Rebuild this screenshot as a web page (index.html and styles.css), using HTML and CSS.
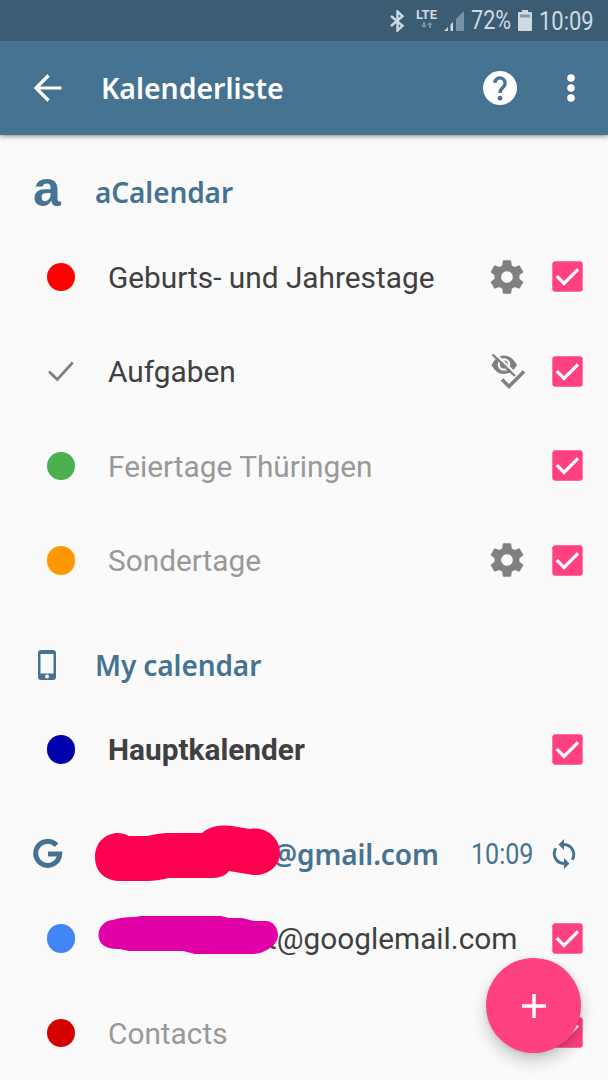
FILE: index.html
```html
<!DOCTYPE html>
<html lang="de">
<head>
<meta charset="utf-8">
<title>Kalenderliste</title>
<link rel="stylesheet" href="styles.css">
</head>
<body>
<svg class="defs" aria-hidden="true">
  <symbol id="gear" viewBox="0 0 24 24"><path d="M19.43 12.98c.04-.32.07-.64.07-.98s-.03-.66-.07-.98l2.11-1.65c.19-.15.24-.42.12-.64l-2-3.46c-.12-.22-.39-.3-.61-.22l-2.49 1c-.52-.4-1.08-.73-1.69-.98l-.38-2.65C14.46 2.18 14.25 2 14 2h-4c-.25 0-.46.18-.49.42l-.38 2.65c-.61.25-1.17.59-1.69.98l-2.49-1c-.23-.09-.49 0-.61.22l-2 3.46c-.13.22-.07.49.12.64l2.11 1.65c-.04.32-.07.65-.07.98s.03.66.07.98l-2.11 1.65c-.19.15-.24.42-.12.64l2 3.46c.12.22.39.3.61.22l2.49-1c.52.4 1.08.73 1.69.98l.38 2.65c.03.24.24.42.49.42h4c.25 0 .46-.18.49-.42l.38-2.65c.61-.25 1.17-.59 1.69-.98l2.49 1c.23.09.49 0 .61-.22l2-3.46c.12-.22.07-.49-.12-.64l-2.11-1.65zM12 15.5c-1.93 0-3.5-1.57-3.5-3.5s1.57-3.5 3.5-3.5 3.5 1.57 3.5 3.5-1.57 3.5-3.5 3.5z"/></symbol>
  <symbol id="box" viewBox="0 0 31 31"><rect x=".3" y=".3" width="30.4" height="30.4" rx="3" fill="#ff4081"/><path d="M4.8 15.2L12 22.3 26 8.3" fill="none" stroke="#fff" stroke-width="3.300"/></symbol>
</svg>

<header class="status">
  <svg class="bluetooth" viewBox="0 0 16 22"><path d="M1.500 6l11.500 9.800L8 20.500V1.500L13 6.200 1.500 16" fill="none" stroke="#cedae1" stroke-width="2.400"/></svg>
  <div class="lte"><span>LTE</span><svg viewBox="0 0 12 6"><path d="M2 0h2v3h2L3 6 0 3h2zM8 6h2V3h2L9 0 6 3h2z"/></svg></div>
  <svg class="signal" viewBox="0 0 20 20"><path d="M0 20l4-4v4zM6.500 20v-6.500l2.500-2.500V20z" fill="#cedae1"/><path d="M12 20V8l8-8v20z" fill="#7692a5"/></svg>
  <span class="cond percent">72%</span>
  <svg class="battery" viewBox="0 0 14 21"><path d="M4 0h6v2h3q1 0 1 1v17q0 1-1 1H1q-1 0-1-1V3q0-1 1-1h3z" fill="#cedae1"/><path d="M2 4.500h10v3H2z" fill="#8198a8"/></svg>
  <span class="cond clock">10:09</span>
</header>

<nav class="appbar">
  <svg class="back" viewBox="0 0 28 28"><path d="M27.500 14H3M14.500 1.500L2 14l12.500 12.500" fill="none" stroke="#fff" stroke-width="3.200"/></svg>
  <h1>Kalenderliste</h1>
  <svg class="help" viewBox="2 2 20 20"><path fill="#fff" d="M12 2C6.480 2 2 6.480 2 12s4.480 10 10 10 10-4.480 10-10S17.520 2 12 2z"/><path d="M9 9a3 3 0 1 1 5.200 2.100c-1.200 1.200-2.200 1.700-2.200 3.900" fill="none" stroke="#467391" stroke-width="2"/><circle cx="12" cy="18" r="1.400" fill="#467391"/></svg>
  <svg class="more" viewBox="0 0 8 28"><circle cx="4" cy="4" r="3.800"/><circle cx="4" cy="14" r="3.800"/><circle cx="4" cy="24" r="3.800"/></svg>
</nav>

<main class="list">
  <div class="row section"><span class="lead letter">a</span><h2>aCalendar</h2></div>
  <div class="row"><span class="mark"><i class="dot red"></i></span><span class="name">Geburts- und Jahrestage</span><svg class="gear"><use href="#gear"/></svg><svg class="box"><use href="#box"/></svg></div>
  <div class="row"><span class="mark"><svg class="tick" viewBox="0 0 28 22"><path d="M2 11.500l8.300 8L25.700 2.500" fill="none" stroke="#808080" stroke-width="2.700"/></svg></span><span class="name">Aufgaben</span>
    <svg class="hidden-tasks" viewBox="0 0 36 36"><path d="M1.500 12Q6 2.500 14 2.500T27 12Q22 21 14 21T1.500 12z" fill="#808080"/><circle cx="14" cy="11.500" r="5.200" fill="#808080" stroke="#fafafa" stroke-width="2.200"/><path d="M4 -.5L27 22" stroke="#fafafa" stroke-width="2.200"/><path d="M2.500 1.500L25 23" stroke="#808080" stroke-width="2.400"/><path d="M13 26l6 6L34 19" fill="none" stroke="#fafafa" stroke-width="4.500"/><path d="M12 26.500l7 7L34 18.500" fill="none" stroke="#808080" stroke-width="3.500"/></svg><svg class="box"><use href="#box"/></svg></div>
  <div class="row"><span class="mark"><i class="dot green"></i></span><span class="name off">Feiertage Thüringen</span><svg class="box"><use href="#box"/></svg></div>
  <div class="row"><span class="mark"><i class="dot orange"></i></span><span class="name off">Sondertage</span><svg class="gear"><use href="#gear"/></svg><svg class="box"><use href="#box"/></svg></div>
  <div class="row section"><span class="lead"><svg class="phone" viewBox="0 0 18 30"><path fill-rule="evenodd" d="M3 0h12q3 0 3 3v24q0 3-3 3H3q-3 0-3-3V3Q0 0 3 0zM2.500 4v19.500h13V4zM9 24.500a2 2 0 1 0 0 4 2 2 0 0 0 0-4z"/></svg></span><h2>My calendar</h2></div>
  <div class="row"><span class="mark"><i class="dot navy"></i></span><span class="name main">Hauptkalender</span><svg class="box"><use href="#box"/></svg></div>
  <div class="row section"><span class="lead"><svg class="google" viewBox="0 0 30 30"><path d="M23.500 6.200A12 12 0 1 0 26.700 15H15" fill="none" stroke="#467391" stroke-width="5"/></svg></span><h2 class="account"><svg class="scribble" viewBox="0 0 186 58"><path d="M1 32C1 17 12 8 24 8q6 0 11 3h18q14-3 20-3h35C117 0 130 0 138 1l18 3c15-3 30 8 30 24 0 13-12 23-27 22l-24-4q-5 7-16 7H75q-13 3-21 3H24C10 55 1 46 1 32z" fill="#ff0050"/></svg>@gmail.com</h2><span class="cond sync-time">10:09</span><svg class="sync" viewBox="0 0 24 30"><g fill="none" stroke="#467391" stroke-width="2.900"><path d="M10 5.500h2a10 10 0 0 1 8.200 15.300M14 24.500h-2A10 10 0 0 1 3.800 9.200"/></g><path fill="#467391" d="M12 0v11L6.500 5.500zM12 19v11l5.500-5.500z"/></svg></div>
  <div class="row"><span class="mark"><i class="dot blue"></i></span><span class="name mail"><svg class="scribble" viewBox="0 0 180 38"><path d="M.5 19C.5 10 8 4 15 4q7-3 22-3l6-1h80l8 2h13l12 3h12c7 0 12 7 12 14 0 8-7 13-13 16q-5 3-13 3H97l-12-3H31q-5-1-9-2C8 34 .5 28 .5 19z" fill="#e100a5"/></svg>t@googlemail.com</span><svg class="box"><use href="#box"/></svg></div>
  <div class="row"><span class="mark"><i class="dot crimson"></i></span><span class="name off">Contacts</span><svg class="box"><use href="#box"/></svg></div>
</main>
<button class="fab" aria-label="Add"><svg viewBox="0 0 24 24"><path d="M12 0v24M0 12h24" stroke="#fff" stroke-width="3.400"/></svg></button>
</body>
</html>
```
FILE: styles.css
```css
* { box-sizing: border-box; }
body { margin: 0; width: 608px; height: 1080px; overflow: hidden; background: #fafafa; font-family: Roboto, sans-serif; position: relative; }
svg { display: block; flex: none; }
.defs { position: absolute; width: 0; height: 0; }
h1, h2 { margin: 0; font-family: "Noto Sans", "Open Sans", sans-serif; font-weight: 600; white-space: nowrap; }
.cond { display: block; transform: scaleX(.865); transform-origin: left center; white-space: nowrap; }

.status { display: flex; align-items: center; height: 41px; padding-left: 389px; background: #3c5c74; color: #cedae1; }
.bluetooth { width: 17px; height: 22px; }
.lte { width: 22px; margin-left: 10px; font: 700 13px/13px Roboto, sans-serif; }
.lte span { display: block; margin-top: -5px; }
.lte svg { width: 12px; height: 6px; margin: 1px 0 0 5px; fill: #7692a5; }
.signal { width: 20px; height: 20px; margin-left: 6px; }
.percent { width: 40px; margin-left: 7px; font-size: 25px; }
.battery { width: 14px; height: 21px; margin-left: 7px; }
.clock { width: 55px; margin-left: 7px; font-size: 25.4px; }

.appbar { display: flex; align-items: center; height: 94px; padding-left: 34px; background: #467391; box-shadow: 0 1px 5px rgba(0,0,0,.5); clip-path: inset(0 0 -12px 0); position: relative; }
.back { width: 28px; height: 28px; }
.appbar h1 { width: 382px; margin-left: 39px; color: #fff; font-size: 28.4px; }
.help { width: 34px; height: 34px; }
.more { width: 8px; height: 28px; margin-left: 50px; fill: #fff; }

.row { display: flex; align-items: center; height: 94.5px; padding: 0 25px 0 34px; position: relative; }
.section { padding: 20px 32px 0 34px; color: #467391; }
.lead { width: 61px; }
.letter { font: 700 50px/50px "Liberation Sans", sans-serif; margin-top: -7px; text-indent: -1px; }
.section h2 { font-size: 28px; letter-spacing: -.1px; flex: 1; }
.mark { width: 74px; padding-left: 12.5px; }
.dot { display: block; width: 28.5px; height: 28.5px; border-radius: 50%; }
.red { background: #f00; }
.green { background: #4caf50; }
.orange { background: #ff9800; }
.navy { background: #0000ab; }
.blue { background: #4285f4; }
.crimson { background: #d50000; }
.tick { width: 28px; height: 22px; }
.name { flex: 1; color: #404040; font-size: 29.8px; white-space: nowrap; padding-top: 1px; }
.off { color: #999; }
.main { font-weight: 700; }
.gear { width: 40px; height: 40px; fill: #808080; margin-right: 25px; }
.hidden-tasks { width: 36px; height: 36px; margin-right: 26px; }
.box { width: 31px; height: 31px; }
.phone { width: 18px; height: 30px; margin-left: 3.5px; fill: #467391; }
.google { width: 30px; height: 30px; margin-left: -1.5px; }
.section .account { padding-left: 177px; }
.account .scribble { position: absolute; left: 94px; top: 28px; width: 186px; height: 58px; }
.mail { padding-left: 159px; }
.mail .scribble { position: absolute; left: 98px; top: 25px; width: 180px; height: 38px; }
.sync-time { width: 62px; margin-right: 19px; font-size: 29px; }
.sync { width: 24px; height: 30px; }

.fab { position: absolute; left: 486px; top: 958px; width: 95px; height: 95px; border: 0; border-radius: 50%; background: #ff4081; box-shadow: 0 8px 16px rgba(0,0,0,.2), 0 1px 4px rgba(0,0,0,.1); display: flex; align-items: center; justify-content: center; padding: 0; }
.fab svg { width: 24px; height: 24px; }
```
